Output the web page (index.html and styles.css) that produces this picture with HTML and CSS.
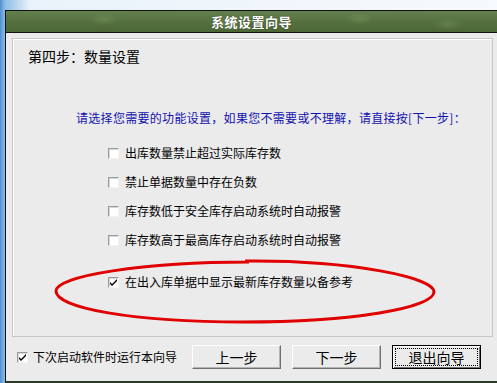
FILE: index.html
```html
<!DOCTYPE html>
<html lang="zh-CN">
<head>
    <meta charset="UTF-8">
    <title>系统设置向导</title>
    <link rel="stylesheet" href="styles.css">
</head>
<body>
    <div class="desktop">
        <div class="dialog">
            <div class="titlebar">系统设置向导</div>

            <div class="groupbox">
                <div class="step-title">第四步：数量设置</div>
                <div class="hint">请选择您需要的功能设置，如果您不需要或不理解，请直接按[下一步]：</div>

                <div class="options">
                    <label class="option"><span class="check"></span>出库数量禁止超过实际库存数</label>
                    <label class="option"><span class="check"></span>禁止单据数量中存在负数</label>
                    <label class="option"><span class="check"></span>库存数低于安全库存启动系统时自动报警</label>
                    <label class="option"><span class="check"></span>库存数高于最高库存启动系统时自动报警</label>
                    <label class="option option-last"><span class="check checked"><svg viewBox="0 0 7 7" width="7" height="7"><path d="M0 3 L2 5 L7 0 L7 2 L2 7 L0 5 Z" fill="#000"/></svg></span>在出入库单据中显示最新库存数量以备参考</label>
                </div>

                <svg class="mark" viewBox="0 0 384 68" width="384" height="68">
                    <path d="M192 3 C300 2 382 20 381 34 C380 50 300 64 190 64 C80 64 3 50 3 33 C3 18 90 4 196 4" fill="none" stroke="#e00000" stroke-width="3"/>
                </svg>
            </div>

            <div class="footer">
                <label class="run-next"><span class="check checked"><svg viewBox="0 0 7 7" width="7" height="7"><path d="M0 3 L2 5 L7 0 L7 2 L2 7 L0 5 Z" fill="#000"/></svg></span>下次启动软件时运行本向导</label>
                <div class="buttons">
                    <button class="btn">上一步</button>
                    <button class="btn">下一步</button>
                    <button class="btn btn-default"><span class="focus">退出向导</span></button>
                </div>
            </div>
        </div>
    </div>
</body>
</html>
```

FILE: styles.css
```css
* { margin: 0; padding: 0; box-sizing: border-box; }
body { width: 497px; height: 383px; overflow: hidden; font-family: "Noto Sans CJK SC", "Noto Sans", sans-serif; font-size: 12px; }
.desktop { height: 383px; padding: 10px 0 0 5px; background: linear-gradient(90deg, #4f8fd0 0, #8dbde8 5px, #e9f2fa 30px, #f7fafd 100%); }
.dialog { height: 373px; background: #ebebeb; border-left: 1px solid #111; border-top: 1px solid #111; border-bottom: 2px solid #2d3a25; display: flex; flex-direction: column; }
.titlebar { height: 22px; border-bottom: 1px solid #111; color: #fff; font-weight: bold; font-size: 13px; line-height: 21px; text-align: center; letter-spacing: 0.5px; text-shadow: 0 0 1px #22301a;
    background:
        radial-gradient(ellipse 14px 6px at 20% 40%, rgba(120,150,95,0.5), transparent),
        radial-gradient(ellipse 18px 7px at 45% 60%, rgba(120,150,95,0.4), transparent),
        radial-gradient(ellipse 14px 6px at 72% 35%, rgba(120,150,95,0.5), transparent),
        radial-gradient(ellipse 16px 6px at 90% 65%, rgba(120,150,95,0.4), transparent),
        linear-gradient(180deg, #64804f 0, #56713f 50%, #4c6636 100%); }
.groupbox { position: relative; height: 299px; margin: 5px 4px 0 6px; border: 1px solid #c6c6c6; box-shadow: inset 1px 1px 0 #fff; padding: 9px 0 0 15px; }
.step-title { font-size: 14px; line-height: 16px; color: #000; }
.hint { margin: 47px 0 0 48px; color: #1212b0; line-height: 14px; letter-spacing: 0.3px; white-space: nowrap; }
.options { display: flex; flex-direction: column; gap: 15px; margin: 21px 0 0 80px; }
.option { display: flex; align-items: center; gap: 6px; line-height: 14px; color: #000; }
.option-last { margin-top: 13px; }
.check { width: 11px; height: 11px; background: #fff; border-top: 1px solid #9a9a9a; border-left: 1px solid #9a9a9a; border-right: 1px solid #f4f4f4; border-bottom: 1px solid #f4f4f4; box-shadow: inset 1px 1px 0 #d8d8d8; display: flex; align-items: center; justify-content: center; }
.mark { position: absolute; left: 40px; top: 219px; }
.footer { flex: 1; display: flex; align-items: flex-start; padding: 8px 0 0 11px; }
.run-next { display: flex; align-items: center; gap: 5px; margin-top: 5px; line-height: 14px; color: #000; width: 175px; }
.buttons { display: flex; gap: 11px; }
.btn { width: 89px; height: 24px; font-family: inherit; font-size: 14px; background: #ebebeb; color: #000; border: 1px solid; border-color: #fff #707070 #707070 #fff; box-shadow: inset -1px -1px 0 #b4b4b4; cursor: pointer; }
.btn-default { border: 1px solid #000; box-shadow: inset 1px 1px 0 #fff, inset -1px -1px 0 #707070; padding: 2px; }
.focus { display: block; height: 100%; border: 1px dotted #000; line-height: 17px; }
```
